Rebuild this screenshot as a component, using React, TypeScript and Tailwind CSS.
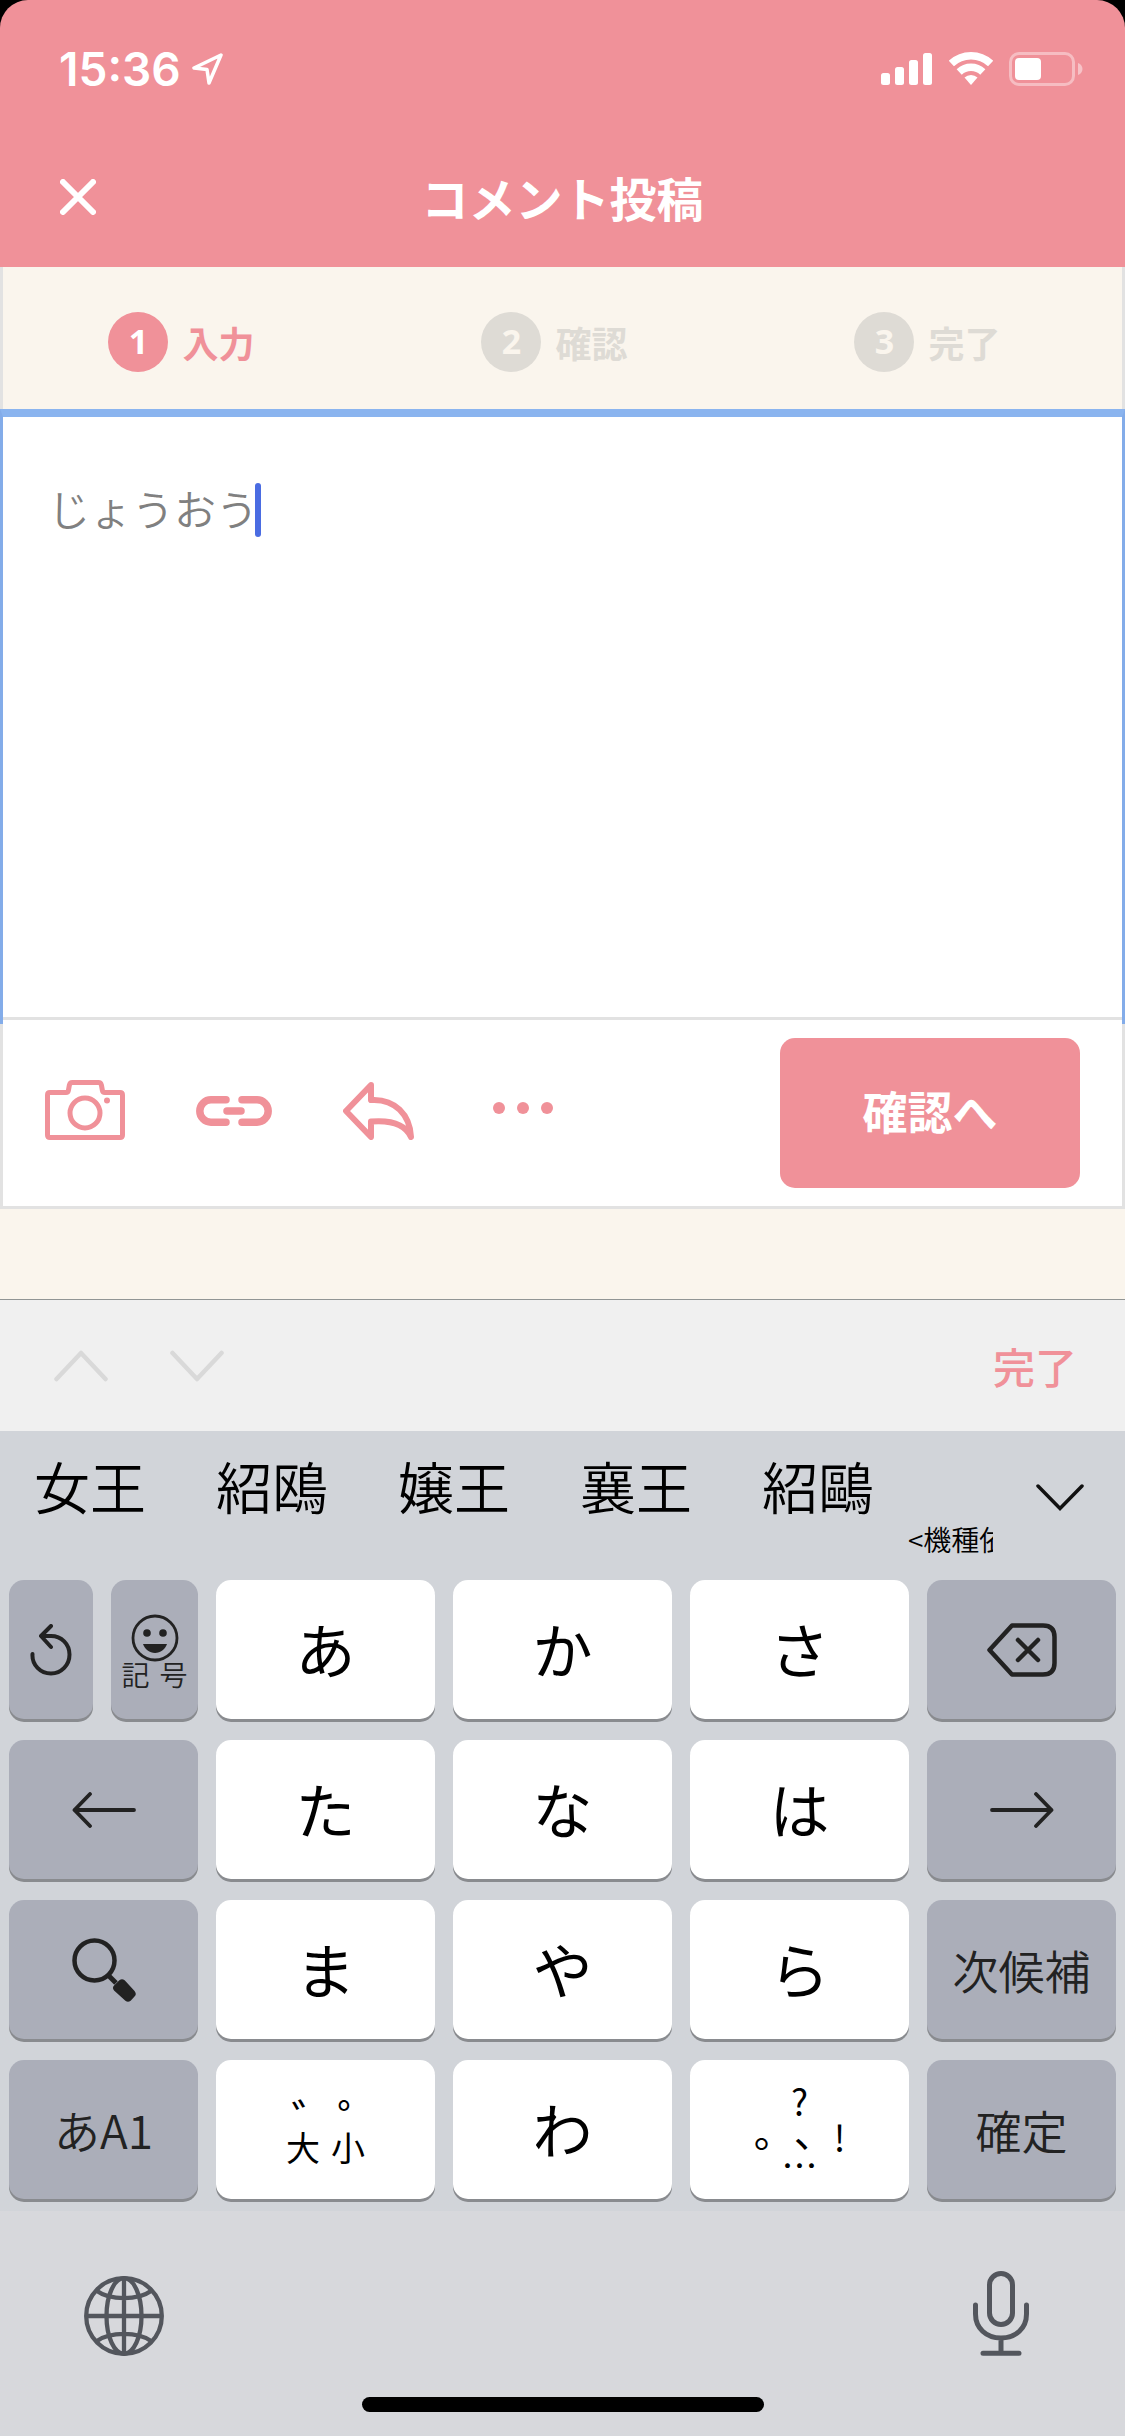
import { useState } from "react";
import type { ReactNode } from "react";

type Step = { no: number; label: string };

const steps: Step[] = [
  { no: 1, label: "入力" },
  { no: 2, label: "確認" },
  { no: 3, label: "完了" },
];

const candidates = ["女王", "紹鴎", "嬢王", "襄王", "紹鷗"];

function StatusBar() {
  return (
    <div className="flex h-[138px] items-center justify-between pr-[42px] pl-[59px] text-white">
      <div className="flex items-center gap-[10px]">
        <span className="font-['Inter','Liberation_Sans',sans-serif] text-[46px] leading-[54px] font-semibold">
          15:36
        </span>
        <svg width="32" height="32" viewBox="0 0 32 32" fill="none" stroke="currentColor" strokeWidth="3.500" strokeLinejoin="round">
          <path d="M30 2 3 15l13 1.500L18 30z" />
        </svg>
      </div>
      <div className="flex items-center gap-4">
        <svg width="52" height="34" viewBox="0 0 52 34" fill="currentColor">
          <rect x="0" y="21" width="9" height="12" rx="2.500" />
          <rect x="14" y="15" width="9" height="18" rx="2.500" />
          <rect x="28" y="8" width="9" height="25" rx="2.500" />
          <rect x="42" y="1" width="9" height="32" rx="2.500" />
        </svg>
        <svg width="44" height="34" viewBox="0 0 44 34" fill="none" stroke="currentColor" strokeWidth="7.500">
          <path d="M2.400 11.500a28.700 28.700 0 0 1 39.200 0" />
          <path d="M10.200 19.900a17.300 17.300 0 0 1 23.600 0" />
          <path d="M15.500 25.600a9.500 9.500 0 0 1 13 0L22 33z" fill="currentColor" stroke="none" />
        </svg>
        <svg width="74" height="34" viewBox="0 0 74 34">
          <rect x="1.500" y="1.500" width="63" height="31" rx="8.500" fill="none" stroke="#fff" strokeOpacity=".4" strokeWidth="3" />
          <path d="M69 11c3 1 4.500 3.500 4.500 6s-1.500 5-4.500 6z" fill="#fff" fillOpacity=".45" />
          <rect x="6" y="6" width="26" height="22" rx="4" fill="#fff" />
        </svg>
      </div>
    </div>
  );
}

function TitleBar() {
  return (
    <div className="grid h-[129px] grid-cols-[1fr_auto_1fr] items-center pb-3 text-white">
      <button type="button" aria-label="閉じる" className="ml-[60px] w-9">
        <svg width="36" height="36" viewBox="0 0 36 36" fill="none" stroke="currentColor" strokeWidth="6" strokeLinecap="round">
          <path d="M3 3l30 30M33 3 3 33" />
        </svg>
      </button>
      <h1 className="text-[47px] leading-[58px] font-bold">コメント投稿</h1>
    </div>
  );
}

function Steps({ current }: { current: number }) {
  return (
    <ol className="grid h-[142px] grid-cols-3 items-center border-x-[3px] border-[#e2e2e2] bg-[#faf5ed] pt-2">
      {steps.map((step) => (
        <li
          key={step.no}
          className={`flex items-center justify-center gap-[14px] pr-4 text-4xl font-bold ${
            step.no === current ? "text-[#f09199]" : "text-[#dedbd5]"
          }`}
        >
          <span
            className={`flex size-[60px] items-center justify-center rounded-full font-['Noto_Sans',sans-serif] text-[34px] ${
              step.no === current ? "bg-[#f09199] text-white" : "bg-[#dedbd5] text-[#faf5ed]"
            }`}
          >
            {step.no}
          </span>
          {step.label}
        </li>
      ))}
    </ol>
  );
}

function Toolbar() {
  return (
    <div className="flex h-48 items-center justify-between border-[3px] border-[#e2e2e2] bg-white pr-[42px] pl-[42px] text-[#f09199]">
      <div className="flex items-center pb-1">
        <button type="button" aria-label="写真" className="mr-[71px]">
          <svg width="80" height="62" viewBox="0 0 80 62" fill="none" stroke="currentColor" strokeWidth="5" strokeLinejoin="round">
            <path d="M2.500 15q0-2.500 2.500-2.500h16q2 0 2.400-2l1-5.500q.6-2.500 3-2.500h26q2.400 0 3 2.500l1 5.500q.4 2 2.400 2H75q2.500 0 2.500 2.500v40q0 2.500-2.500 2.500H5Q2.500 57.500 2.500 55z" />
            <circle cx="40" cy="33" r="15" />
            <circle cx="62" cy="20.500" r="3" fill="currentColor" stroke="none" />
          </svg>
        </button>
        <button type="button" aria-label="リンク" className="mr-[71px]">
          <svg width="76" height="30" viewBox="0 0 76 30" fill="none" stroke="currentColor" strokeWidth="7.500" strokeLinecap="round">
            <path d="M30 3.800H15a11.200 11.200 0 0 0 0 22.400h15M46 3.800h15a11.200 11.200 0 0 1 0 22.400H46M31 15h14" />
          </svg>
        </button>
        <button type="button" aria-label="返信" className="mr-[79px]">
          <svg width="71" height="58" viewBox="0 0 71 58" fill="none" stroke="currentColor" strokeWidth="6" strokeLinejoin="round">
            <path d="M28 3 3 29l25 26V39.500c18-1.500 34 2 40 15.500C67 33 52 16.500 28 18z" />
          </svg>
        </button>
        <button type="button" aria-label="その他">
          <svg width="60" height="18" viewBox="0 0 60 18" fill="currentColor">
            <circle cx="6" cy="6" r="6" />
            <circle cx="30" cy="6" r="6" />
            <circle cx="54" cy="6" r="6" />
          </svg>
        </button>
      </div>
      <button type="submit" className="h-[150px] w-[300px] rounded-[15px] bg-[#f09199] pb-1 text-[45px] font-bold text-white">
        確認へ
      </button>
    </div>
  );
}

function Chevron({ up = false }: { up?: boolean }) {
  return (
    <svg width="54" height="32" viewBox="0 0 54 32" fill="none" stroke="currentColor" strokeWidth="4.500" strokeLinecap="round" strokeLinejoin="round">
      <path d={up ? "M2.500 29 27 3l24.500 26" : "M2.500 3 27 29 51.500 3"} />
    </svg>
  );
}

function AccessoryBar() {
  return (
    <div className="flex h-[132px] items-center justify-between border-t border-[#919595] bg-[#f0f0f0] pr-12 pl-[54px]">
      <div className="flex gap-[62px] text-[#d9d9d9]">
        <button type="button" aria-label="前へ">
          <Chevron up />
        </button>
        <button type="button" aria-label="次へ">
          <Chevron />
        </button>
      </div>
      <button type="button" className="text-[42px] leading-[54px] font-medium text-[#f09199]">
        完了
      </button>
    </div>
  );
}

function CandidateBar() {
  return (
    <div className="flex h-[140px] justify-between pr-[41px] pl-[34px]">
      <div className="flex gap-[70px] pt-3 text-[56px] leading-[84px] font-[350] whitespace-nowrap">
        {candidates.map((word) => (
          <button type="button" key={word} className="h-[84px]">
            {word}
          </button>
        ))}
      </div>
      <div className="ml-[34px] flex-1 overflow-hidden pt-[88px] text-[28px] leading-10 font-[350] whitespace-nowrap">
        &lt;機種依
      </div>
      <button type="button" aria-label="候補一覧" className="ml-[43px] pb-2">
        <svg width="48" height="27" viewBox="0 0 48 27" fill="none" stroke="#111" strokeWidth="3.500" strokeLinecap="round">
          <path d="M2 2l22 22.500L46 2" />
        </svg>
      </button>
    </div>
  );
}

type KeyProps = { children: ReactNode; dark?: boolean; label?: string };

function Key({ children, dark = false, label }: KeyProps) {
  return (
    <button
      type="button"
      aria-label={label}
      className={`flex h-[139px] min-w-0 flex-col items-center justify-center rounded-[15px] shadow-[0_3px_0_#898b8f] ${
        dark ? "bg-[#abaeb9] text-[46px] font-[350] text-[#222]" : "bg-white pb-1 text-[60px] font-normal text-black"
      }`}
    >
      {children}
    </button>
  );
}

function Keys() {
  return (
    <div className="grid grid-cols-[189fr_219fr_219fr_219fr_189fr] gap-x-[18px] gap-y-[21px] px-[9px] pt-[9px] pb-3">
      <div className="grid grid-cols-[84fr_87fr] gap-[18px]">
        <Key dark label="戻す">
          <svg width="42" height="52" viewBox="0 0 42 52" fill="none" stroke="currentColor" strokeWidth="4" strokeLinecap="round" strokeLinejoin="round">
            <path d="M2.500 30c-.8 11 8 19.500 18.500 19.500S39.500 41 39.500 30.500 31.500 12 21 12h-9M21 2 11 12l10 11" />
          </svg>
        </Key>
        <Key dark label="記号">
          <svg width="48" height="48" viewBox="0 0 48 48">
            <circle cx="24" cy="24" r="22" fill="none" stroke="currentColor" strokeWidth="2.800" />
            <circle cx="16" cy="19" r="3.800" fill="currentColor" />
            <circle cx="32" cy="19" r="3.800" fill="currentColor" />
            <path d="M12 30h24c-2 5.500-6.500 9-12 9s-10-3.500-12-9z" fill="currentColor" />
          </svg>
          <span className="flex gap-[10px] text-[28px] leading-6">
            <span>記</span>
            <span>号</span>
          </span>
        </Key>
      </div>
      <Key>あ</Key>
      <Key>か</Key>
      <Key>さ</Key>
      <Key dark label="削除">
        <svg width="70" height="54" viewBox="0 0 70 54" fill="none" stroke="currentColor" strokeWidth="4.500" strokeLinecap="round" strokeLinejoin="round">
          <path d="M25 2.500h31q11.500 0 11.500 11.500v26q0 11.500-11.500 11.500H25L2.500 27zM31 17l20 20M51 17 31 37" />
        </svg>
      </Key>

      <Key dark label="左へ">
        <svg width="64" height="36" viewBox="0 0 64 36" fill="none" stroke="currentColor" strokeWidth="3.800" strokeLinecap="round" strokeLinejoin="round">
          <path d="M62 18H2.500M18 2 2.500 18 18 34" />
        </svg>
      </Key>
      <Key>た</Key>
      <Key>な</Key>
      <Key>は</Key>
      <Key dark label="右へ">
        <svg width="64" height="36" viewBox="0 0 64 36" fill="none" stroke="currentColor" strokeWidth="3.800" strokeLinecap="round" strokeLinejoin="round">
          <path d="M2 18h59.500M46 2l15.500 16L46 34" />
        </svg>
      </Key>

      <Key dark label="検索">
        <svg width="64" height="64" viewBox="0 0 64 64" fill="none" stroke="currentColor">
          <circle cx="22.500" cy="22.500" r="20" strokeWidth="4.500" />
          <path d="M36 37l8 8" strokeWidth="5" />
          <path d="M43 48l5-5q2-1.500 4 0l10 11q1.500 2 0 3.500l-4 4.500q-2 1.500-4 0L43 52q-2-2 0-4z" fill="currentColor" strokeWidth="2" />
        </svg>
      </Key>
      <Key>ま</Key>
      <Key>や</Key>
      <Key>ら</Key>
      <Key dark>次候補</Key>

      <Key dark>あA1</Key>
      <Key label="濁点 半濁点 大文字 小文字">
        <span className="pl-6 text-[46px] leading-[38px]">゛゜</span>
        <span className="flex gap-[11px] text-[34px] leading-5">
          <span>大</span>
          <span>小</span>
        </span>
      </Key>
      <Key>わ</Key>
      <Key label="句読点">
        <span className="text-4xl leading-9">?</span>
        <span className="flex items-start text-4xl leading-9">
          <span className="text-[40px] leading-6">。</span>
          <span className="text-[40px] leading-6">、</span>
          <span>!</span>
        </span>
        <span className="text-4xl leading-5">…</span>
      </Key>
      <Key dark>確定</Key>
    </div>
  );
}

function KeyboardFooter() {
  return (
    <div className="flex flex-col items-center bg-[#d7d8dc] pt-[60px] pb-6 text-[#53565d]">
      <div className="flex h-[85px] w-full justify-between pr-24 pl-[84px]">
        <button type="button" aria-label="キーボード切替" className="pt-[5px]">
          <svg width="80" height="80" viewBox="0 0 80 80" fill="none" stroke="currentColor" strokeWidth="4.300">
            <circle cx="40" cy="40" r="37.800" />
            <ellipse cx="40" cy="40" rx="17.500" ry="37.800" />
            <path d="M40 2v76M2 40h76M13 15c13 9.500 41 9.500 54 0M13 65c13-9.500 41-9.500 54 0" />
          </svg>
        </button>
        <button type="button" aria-label="音声入力">
          <svg width="56" height="85" viewBox="0 0 56 85" fill="none" stroke="currentColor" strokeWidth="5" strokeLinecap="round">
            <rect x="16.500" y="2.500" width="23" height="51" rx="11.500" />
            <path d="M2.500 34v9c0 14 10.500 24 25.500 24s25.500-10 25.500-24v-9M28 67v15M10 82.300h36" />
          </svg>
        </button>
      </div>
      <div className="mt-[41px] h-[15px] w-[402px] rounded-full bg-black" />
    </div>
  );
}

export default function App() {
  const [comment, setComment] = useState("じょうおう");

  return (
    <div className="flex min-h-screen flex-col bg-black font-['Noto_Sans_CJK_JP',sans-serif]">
      <header className="rounded-t-[28px] bg-[#f09199]">
        <StatusBar />
        <TitleBar />
      </header>

      <main className="flex flex-1 flex-col bg-[#faf5ed]">
        <Steps current={1} />
        <form className="bg-white" onSubmit={(e) => e.preventDefault()}>
          {/* focus ring hangs a little over the toolbar */}
          <div className="relative z-10 -mb-[7px] h-[615px] border-x-[3px] border-t-8 border-x-[#83ace9] border-t-[#8ab4ef]">
            <textarea
              aria-label="コメント"
              value={comment}
              onChange={(e) => setComment(e.target.value)}
              className="block h-full w-full resize-none bg-transparent px-[45px] pt-16 text-[42px] leading-[54px] font-[350] text-[#808080] caret-transparent outline-none"
            />
            <span className="absolute top-[66px] left-[252px] h-[54px] w-[6px] rounded-full bg-[#4a6ce2]" />
          </div>
          <Toolbar />
        </form>
      </main>

      <AccessoryBar />
      <div className="bg-[#d1d4d9]">
        <CandidateBar />
        <Keys />
      </div>
      <KeyboardFooter />
    </div>
  );
}
